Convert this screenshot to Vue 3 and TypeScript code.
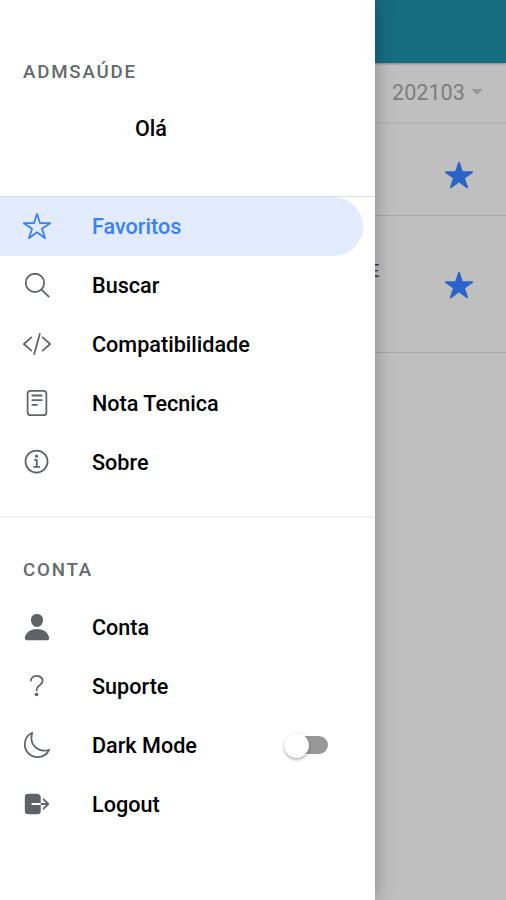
<script setup lang="ts">
import { ref } from 'vue'

interface MenuItem {
  id: string
  label: string
  filled?: boolean
  paths: string[]
  dot?: { cx: number; cy: number; r: number }
}

const selected = ref('favoritos')
const darkMode = ref(false)

const mainItems: MenuItem[] = [
  { id: 'favoritos', label: 'Favoritos', paths: ['M480 208H308L256 48l-52 160H32l140 96-54 160 138-100 138 100-54-160z'] },
  { id: 'buscar', label: 'Buscar', paths: ['M221 64a157 157 0 1 0 157 157A157 157 0 0 0 221 64z', 'M338 338L456 456'] },
  { id: 'compat', label: 'Compatibilidade', paths: ['M160 368L32 256l128-112M352 368l128-112-128-112M304 84l-96 344'] },
  { id: 'nota', label: 'Nota Tecnica', paths: ['M144 48h224a48 48 0 0 1 48 48v320a48 48 0 0 1-48 48H144a48 48 0 0 1-48-48V96a48 48 0 0 1 48-48z', 'M176 128h160M176 208h160M176 288h80'] },
  { id: 'sobre', label: 'Sobre', paths: ['M248 60a188 188 0 1 0 0 376a188 188 0 1 0 0-376z', 'M220 220h32v116', 'M208 340h88'], dot: { cx: 248, cy: 156, r: 26 } },
]

const accountItems: MenuItem[] = [
  { id: 'conta', label: 'Conta', filled: true, paths: ['M332.64 64.58C313.18 43.57 286 32 256 32c-30.16 0-57.43 11.5-76.8 32.38-19.58 21.11-29.12 49.8-26.88 80.78C156.76 206.28 203.27 256 256 256s99.16-49.71 103.67-110.82c2.27-30.7-7.33-59.33-27.03-80.6zM432 480H80a31 31 0 0 1-24.2-11.13c-6.5-7.77-9.12-18.38-7.18-29.11C57.06 392.94 83.4 353.61 124.8 326c36.78-24.51 83.37-38 131.2-38s94.42 13.5 131.2 38c41.4 27.6 67.74 66.93 76.18 113.75 1.94 10.73-.68 21.34-7.18 29.11A31 31 0 0 1 432 480z'] },
  { id: 'suporte', label: 'Suporte', paths: ['M150 164s1.44-33 33.54-59.46C202.6 88.83 230 84.28 251 84c18.73-.23 35.47 2.94 45.48 7.82C313.59 100.2 352 120.6 352 164c0 45.67-29.18 66.37-62.35 89.18S248 298.36 248 330'], dot: { cx: 248, cy: 402, r: 31 } },
  { id: 'dark', label: 'Dark Mode', paths: ['M160 136c0-30.62 4.51-61.61 16-88C99.57 81.27 48 159.32 48 248c0 119.29 96.71 216 216 216 88.68 0 166.73-51.57 200-128-26.39 11.49-57.38 16-88 16-119.29 0-216-96.71-216-216z'] },
  { id: 'logout', label: 'Logout', filled: true, paths: ['M160 256a16 16 0 0 1 16-16h144V136c0-32-33.79-56-64-56H104a56 56 0 0 0-56 56v240a56 56 0 0 0 56 56h160a56 56 0 0 0 56-56V272H176a16 16 0 0 1-16-16zM459.31 244.69l-80-80a16 16 0 0 0-22.62 22.62L409.37 240H320v32h89.37l-52.68 52.69a16 16 0 1 0 22.62 22.62l80-80a16 16 0 0 0 0-22.62z'] },
]

const starPath = 'M394 480a16 16 0 0 1-9.39-3L256 383.76 127.39 477a16 16 0 0 1-24.55-18.08L153 310.35 23 221.2a16 16 0 0 1 9-29.2h160.38l48.4-148.95a16 16 0 0 1 30.44 0l48.4 149H480a16 16 0 0 1 9.05 29.2L359 310.35l50.13 148.53A16 16 0 0 1 394 480z'
</script>

<template>
  <div class="app">
    <nav class="menu">
      <section class="group group-main">
        <h2 class="heading">ADMSAÚDE</h2>
        <p class="greeting">Olá</p>
        <ul class="list list-main">
          <li
            v-for="item in mainItems"
            :key="item.id"
            class="item"
            :class="{ active: selected === item.id }"
            @click="selected = item.id"
          >
            <svg class="icon" :class="{ filled: item.filled }" viewBox="0 0 512 512">
              <path v-for="d in item.paths" :key="d" :d="d" />
              <circle v-if="item.dot" class="dot" :cx="item.dot.cx" :cy="item.dot.cy" :r="item.dot.r" />
            </svg>
            <span class="label">{{ item.label }}</span>
          </li>
        </ul>
      </section>
      <section class="group">
        <h2 class="heading heading-account">CONTA</h2>
        <ul class="list">
          <li v-for="item in accountItems" :key="item.id" class="item">
            <svg class="icon" :class="{ filled: item.filled }" viewBox="0 0 512 512">
              <path v-for="d in item.paths" :key="d" :d="d" />
              <circle v-if="item.dot" class="dot" :cx="item.dot.cx" :cy="item.dot.cy" :r="item.dot.r" />
            </svg>
            <span class="label">{{ item.label }}</span>
            <button
              v-if="item.id === 'dark'"
              class="toggle"
              :class="{ on: darkMode }"
              @click="darkMode = !darkMode"
            >
              <span class="knob"></span>
            </button>
          </li>
        </ul>
      </section>
    </nav>
    <main class="page">
      <header class="toolbar"></header>
      <div class="period">
        <span>202103</span>
        <span class="caret"></span>
      </div>
      <div class="row row-short">
        <svg class="star" viewBox="0 0 512 512"><path :d="starPath" /></svg>
      </div>
      <div class="row row-tall">
        <span class="covered">E</span>
        <svg class="star" viewBox="0 0 512 512"><path :d="starPath" /></svg>
      </div>
    </main>
  </div>
</template>

<style>
body {
  margin: 0;
  overflow: hidden;
}
</style>

<style scoped>
.app {
  display: flex;
  width: 506px;
  height: 900px;
  overflow: hidden;
  font-family: Roboto, "Liberation Sans", sans-serif;
  background: #bfbfbf;
}
.menu {
  z-index: 1;
  flex: none;
  box-sizing: border-box;
  width: 375px;
  height: 900px;
  background: #fff;
  box-shadow: 0 0 18px rgba(0, 0, 0, 0.3);
}
.group-main {
  box-sizing: border-box;
  height: 518px;
  border-bottom: 2px solid #f1f1f1;
}
.heading {
  margin: 0;
  padding: 60px 0 0 23px;
  font-size: 18.7px;
  line-height: 24px;
  font-weight: 500;
  letter-spacing: 1.8px;
  color: #66696d;
}
.heading-account {
  padding-top: 40px;
  padding-bottom: 16px;
}
.greeting {
  margin: 31px 0 0;
  padding-left: 135px;
  height: 81px;
  font-size: 21.5px;
  line-height: 28px;
  font-weight: 500;
  color: #000;
}
.list {
  margin: 0;
  padding: 0;
  list-style: none;
}
.list-main {
  border-top: 1px solid #dedede;
}
.item {
  display: flex;
  align-items: center;
  box-sizing: border-box;
  width: 363px;
  height: 59px;
  padding-left: 22px;
  border-radius: 0 30px 30px 0;
  color: #000;
}
.item.active {
  background: #e2ebff;
  color: #3880ff;
}
.icon {
  flex: none;
  width: 30px;
  height: 30px;
  margin: -1px 40px 0 0;
  fill: none;
  stroke: #5f6368;
  stroke-width: 30;
  stroke-linecap: round;
  stroke-linejoin: round;
  overflow: visible;
}
.icon.filled {
  fill: #5f6368;
  stroke: none;
}
.active .icon {
  stroke: #3880ff;
}
.dot {
  fill: #5f6368;
  stroke: none;
}
.label {
  font-size: 21.6px;
  line-height: 28px;
  font-weight: 500;
}
.toggle {
  display: flex;
  align-items: center;
  width: 42px;
  height: 18px;
  margin: -1px 35px 0 auto;
  padding: 0;
  border: 0;
  border-radius: 9px;
  background: #989898;
}
.knob {
  flex: none;
  width: 25px;
  height: 25px;
  margin-left: -2px;
  border-radius: 50%;
  background: #fff;
  box-shadow: 0 2px 3px rgba(0, 0, 0, 0.25), 0 0 2px rgba(0, 0, 0, 0.15);
}
.toggle.on .knob {
  margin-left: 19px;
}
.page {
  flex: 1;
  min-width: 0;
}
.toolbar {
  height: 63px;
  background: #176d80;
  box-shadow: 0 1px 2px rgba(0, 0, 0, 0.3);
}
.period {
  display: flex;
  align-items: center;
  box-sizing: border-box;
  height: 61px;
  padding: 0 0 1px 17px;
  border-bottom: 2px solid #b5b5b5;
  font-size: 21.6px;
  color: #7d7d7d;
}
.caret {
  margin-left: 6px;
  border: 6px solid transparent;
  border-top-color: #999;
  border-bottom: 0;
}
.row {
  display: flex;
  align-items: center;
  box-sizing: border-box;
  padding-right: 33px;
  border-bottom: 1px solid #a9a9a9;
}
.row-short {
  height: 92px;
  padding-top: 10px;
}
.row-tall {
  height: 137px;
  padding-top: 2px;
}
.covered {
  margin: -28px 0 0 -6px;
  font-size: 18.5px;
  line-height: 24px;
  color: #3a3a3a;
}
.star {
  width: 30px;
  height: 30px;
  margin-right: -1px;
  margin-left: auto;
  fill: #2a64c8;
}
</style>
